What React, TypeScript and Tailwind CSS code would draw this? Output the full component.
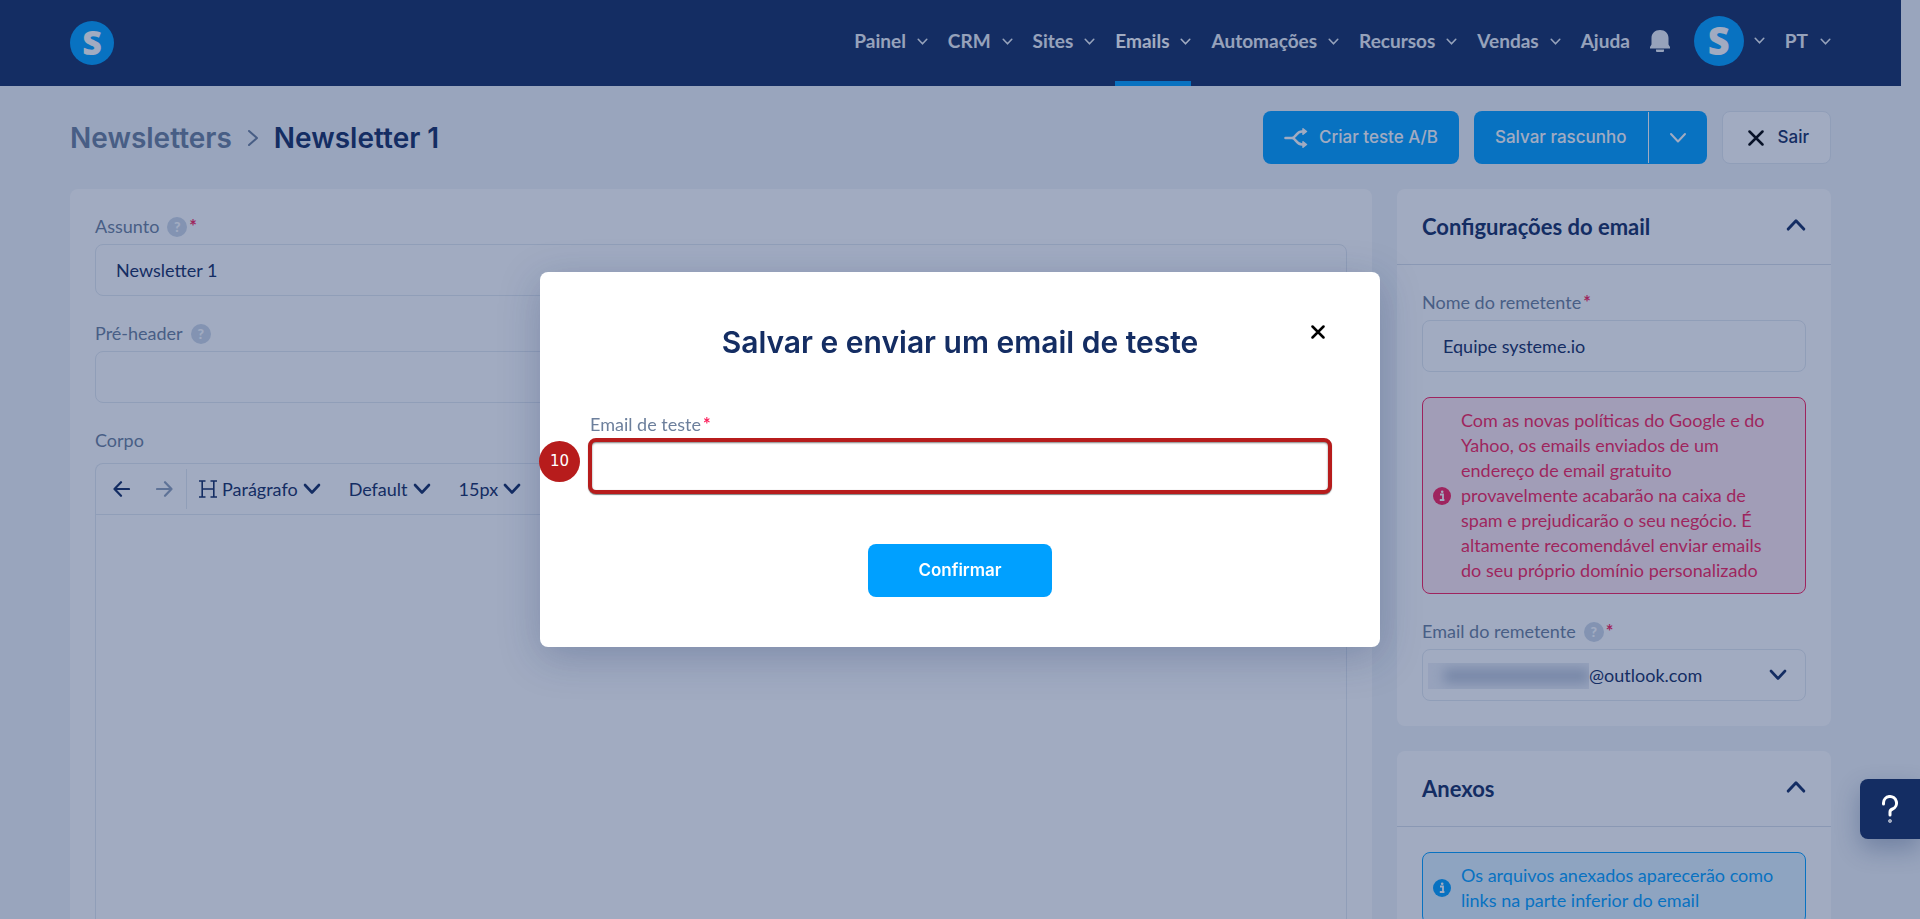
import React from "react";

type ChevronProps = { className: string; width?: number; flip?: boolean };

function Chevron({ className, width = 2.6, flip = false }: ChevronProps) {
  return (
    <svg viewBox="0 0 18 12" className={className} fill="none" stroke="currentColor" strokeWidth={width} strokeLinecap="round" strokeLinejoin="round" aria-hidden="true">
      <path d={flip ? "M2 10 9 2.5 16 10" : "M2 2 9 9.5 16 2"} />
    </svg>
  );
}

function Brand({ className }: { className: string }) {
  return (
    <span className={`flex shrink-0 items-center justify-center rounded-full bg-[#00a0ff] font-['Open_Sans',sans-serif] font-extrabold leading-none text-white ${className}`}>
      S
    </span>
  );
}

const menu = ["Painel", "CRM", "Sites", "Emails", "Automações", "Recursos", "Vendas"];

function Header() {
  return (
    <header className="flex h-[86px] shrink-0 items-center justify-between bg-[#142d63] px-[70px] text-[19px] font-bold text-[#edf1f6]">
      <a href="#inicio" aria-label="Início">
        <Brand className="size-11 pb-0.5 text-[34px]" />
      </a>
      <nav className="flex h-full items-center gap-5">
        {menu.map((item) => (
          <a
            key={item}
            href={`#${item.toLowerCase()}`}
            className={`flex h-full items-center gap-[11px] border-b-[5px] pt-0.5 ${item === "Emails" ? "border-b-[#00a0ff] text-white" : "border-b-transparent"}`}
          >
            {item}
            <Chevron className="w-[11px]" />
          </a>
        ))}
        <a href="#ajuda" className="pb-[3px]">Ajuda</a>
        <button type="button" aria-label="Notificações" className="pb-1">
          <svg viewBox="0 0 20 22" className="w-5" fill="currentColor" aria-hidden="true">
            <path d="M10 0C5 0 1.500 3.500 1.500 8v6.500L0 17v1.500h20V17l-1.500-2.500V8C18.500 3.500 15 0 10 0Z" />
            <path d="M6 19.500h8V21q0 1-1 1H7q-1 0-1-1Z" />
          </svg>
        </button>
        <button type="button" aria-label="Conta" className="ml-1 flex items-center gap-2.5 pb-1">
          <Brand className="size-[50px] pb-0.5 text-[38px]" />
          <Chevron className="w-[11px]" />
        </button>
        <button type="button" className="flex items-center gap-3 pb-[3px]">
          PT
          <Chevron className="w-[11px]" />
        </button>
      </nav>
    </header>
  );
}

function TitleBar() {
  return (
    <div className="flex items-center justify-between font-['Inter',sans-serif]">
      <h1 className="flex items-center gap-4 text-[28px] font-semibold leading-10 text-[#142d63]">
        <a href="#newsletters" className="text-[#6c7f9c]">Newsletters</a>
        <svg viewBox="0 0 10 16" className="w-2.5 text-[#6c7f9c]" fill="none" stroke="currentColor" strokeWidth="2" strokeLinecap="round" strokeLinejoin="round" aria-hidden="true">
          <path d="M1 1 9 8 1 15" />
        </svg>
        Newsletter 1
      </h1>
      <div className="flex h-[53px] gap-[15px] text-[17px] font-medium">
        <button type="button" className="flex items-center gap-[11px] rounded-lg bg-[#00a0ff] px-[21px] text-white">
          <svg viewBox="0 0 24 22" className="w-6" fill="none" stroke="currentColor" strokeWidth="2.600" strokeLinecap="round" strokeLinejoin="round" aria-hidden="true">
            <path d="M1.500 11H8C12 11 12 4.500 18 4.500h1M8 11c4 0 4 6.500 10 6.500h1" />
            <path d="m19 1.800 3.500 2.700L19 7.200ZM19 14.800l3.500 2.700-3.500 2.700Z" fill="currentColor" strokeWidth="1.500" />
          </svg>
          Criar teste A/B
        </button>
        <div className="flex rounded-lg bg-[#00a0ff] py-px text-white">
          <button type="button" className="px-[21px]">Salvar rascunho</button>
          <button type="button" aria-label="Mais opções" className="border-l border-white px-5">
            <Chevron className="w-[18px]" width={2} />
          </button>
        </div>
        <button type="button" className="flex items-center gap-3.5 rounded-lg border border-[#e3e9f0] bg-white pl-[25px] pr-[21px] text-[#142d63]">
          <svg viewBox="0 0 16 16" className="w-4 text-black" fill="none" stroke="currentColor" strokeWidth="2.500" strokeLinecap="round" aria-hidden="true">
            <path d="m1.500 1.500 13 13M14.500 1.500l-13 13" />
          </svg>
          Sair
        </button>
      </div>
    </div>
  );
}

type LabelProps = { htmlFor?: string; text: string; help?: boolean; required?: boolean; tight?: boolean };

function Label({ htmlFor, text, help, required, tight }: LabelProps) {
  return (
    <label htmlFor={htmlFor} className={`flex h-[25px] items-center text-[18px] leading-[25px] text-[#6c7f9c] ${tight ? "mb-[3px]" : "mb-[5px]"}`}>
      {text}
      {help && (
        <span className="ml-2 flex size-5 items-center justify-center rounded-full bg-[#cdd8e7] text-sm font-black leading-none text-white">?</span>
      )}
      {required && <span className="ml-0.5 self-start font-bold leading-6 text-[#fb1e5a]">*</span>}
    </label>
  );
}

const field = "block h-[52px] w-full rounded-lg border border-[#e3e9f0] bg-white px-5 text-[18px] text-[#142d63] outline-none";

function Tool({ children }: { children: React.ReactNode }) {
  return (
    <button type="button" className="flex items-center gap-[5px]">
      {children}
      <Chevron className="w-[18px]" />
    </button>
  );
}

function Editor() {
  return (
    <div className="mt-2.5 flex grow flex-col rounded-t-lg border border-b-0 border-[#e3e9f0] text-[18px] text-[#142d63]">
      <div className="flex h-[51px] items-center border-b border-[#e3e9f0] pl-[17px]">
        <button type="button" aria-label="Desfazer">
          <svg viewBox="0 0 17 16" className="w-[17px]" fill="none" stroke="currentColor" strokeWidth="2.200" strokeLinecap="round" strokeLinejoin="round" aria-hidden="true">
            <path d="M16 8H1.500M8 1.200 1.500 8 8 14.800" />
          </svg>
        </button>
        <button type="button" aria-label="Refazer" className="ml-[26px] text-[#90a1b9]">
          <svg viewBox="0 0 17 16" className="w-[17px]" fill="none" stroke="currentColor" strokeWidth="2.200" strokeLinecap="round" strokeLinejoin="round" aria-hidden="true">
            <path d="M1 8h14.500M9 1.200 15.500 8 9 14.800" />
          </svg>
        </button>
        <span className="ml-[13px] h-10 w-px bg-[#e3e9f0]" />
        <div className="ml-3 flex items-center gap-7">
          <Tool>
            <svg viewBox="0 0 18 18" className="w-[18px]" fill="none" stroke="currentColor" strokeWidth="1.600" aria-hidden="true">
              <path d="M0 1h6.500M11.500 1H18M0 17h6.500M11.500 17H18M3.200 1v16M14.800 1v16M3.200 9h11.600" />
            </svg>
            Parágrafo
          </Tool>
          <Tool>Default</Tool>
          <Tool>15px</Tool>
        </div>
      </div>
    </div>
  );
}

function Panel({ title, children }: { title: string; children: React.ReactNode }) {
  return (
    <section className="shrink-0 rounded-lg bg-white">
      <button type="button" className="flex h-[76px] w-full items-center justify-between border-b border-[#d9e0ea] px-[25px] text-[#142d63]">
        <h2 className="text-[22px] font-bold">{title}</h2>
        <Chevron className="mb-1 w-5" flip />
      </button>
      <div className="flex flex-col gap-[25px] p-[25px]">{children}</div>
    </section>
  );
}

function Notice({ className, children }: { className: string; children: React.ReactNode }) {
  return (
    <div className={`flex items-center gap-2.5 rounded-lg border py-2.5 pl-2.5 pr-6 text-[18px] leading-[25px] ${className}`}>
      <svg viewBox="0 0 18 18" className="w-[18px] shrink-0" aria-hidden="true">
        <circle cx="9" cy="9" r="9" fill="currentColor" />
        <path d="M7 7.500h3v5M6.800 13h4.600" fill="none" stroke="#ffffff" strokeWidth="1.800" />
        <circle cx="9.200" cy="4.700" r="1.300" fill="#ffffff" />
      </svg>
      <p>{children}</p>
    </div>
  );
}

function Sidebar() {
  return (
    <aside className="flex w-[434px] shrink-0 flex-col gap-[25px]">
      <Panel title="Configurações do email">
        <div>
          <Label htmlFor="remetente" text="Nome do remetente" required />
          <input id="remetente" className={field} defaultValue="Equipe systeme.io" />
        </div>
        <Notice className="border-[#fb1e5a] bg-[#ffe8ee] text-[#fb1e5a]">
          Com as novas políticas do Google e do Yahoo, os emails enviados de um endereço de email gratuito provavelmente acabarão na caixa de spam e prejudicarão o seu negócio. É altamente recomendável enviar emails do seu próprio domínio personalizado
        </Notice>
        <div>
          <Label htmlFor="email-remetente" text="Email do remetente" help required />
          <div className="relative">
            <select id="email-remetente" className="block h-[52px] w-full appearance-none rounded-lg border border-[#e3e9f0] bg-white pl-[166px] text-[18px] text-[#142d63]">
              <option>@outlook.com</option>
            </select>
            <span className="absolute left-1.5 top-3.5 h-[26px] w-[161px] overflow-hidden bg-[#eef1f7]">
              <span className="absolute inset-y-1.5 left-4 right-0 bg-[#b7c1d3] blur-[6px]" />
            </span>
            <span className="pointer-events-none absolute inset-y-0 right-[19px] flex items-center text-[#142d63]">
              <Chevron className="w-[18px]" />
            </span>
          </div>
        </div>
      </Panel>
      <Panel title="Anexos">
        <Notice className="border-[#00a0ff] bg-[#e0f3ff] text-[#00a0ff]">
          Os arquivos anexados aparecerão como links na parte inferior do email
        </Notice>
      </Panel>
    </aside>
  );
}

function TestDialog() {
  return (
    <div role="dialog" aria-modal="true" aria-labelledby="titulo-dialogo" className="relative w-[840px] rounded-lg bg-white p-[50px] shadow-[0_10px_40px_rgba(20,45,99,0.25)]">
      <button type="button" aria-label="Fechar" className="absolute right-[55px] top-[53px] text-black">
        <svg viewBox="0 0 14 14" className="w-3.5" fill="none" stroke="currentColor" strokeWidth="2.500" strokeLinecap="round" aria-hidden="true">
          <path d="m1.500 1.500 11 11M12.500 1.500l-11 11" />
        </svg>
      </button>
      <h2 id="titulo-dialogo" className="text-center font-['Inter',sans-serif] text-[30px] font-semibold leading-10 text-[#142d63]">
        Salvar e enviar um email de teste
      </h2>
      <div className="relative mt-[50px]">
        <Label htmlFor="email-teste" text="Email de teste" required tight />
        <input id="email-teste" type="email" className="block h-[52px] w-full rounded-md bg-white px-5 text-[18px] text-[#142d63] shadow-[0_1px_1px_2px_rgba(0,0,0,0.5),inset_0_1px_2px_2px_rgba(0,0,0,0.5)] outline-4 outline-offset-[-2px] outline-[#b71c1c]" />
        <span className="absolute -left-[51px] bottom-2.5 flex size-[41px] items-center justify-center rounded-full bg-[#b71c1c] font-['DejaVu_Sans',sans-serif] text-[15px] text-white">10</span>
      </div>
      <button type="button" className="mx-auto mt-[52px] block h-[53px] w-[184px] rounded-lg bg-[#00a0ff] font-['Inter',sans-serif] text-[17px] font-semibold text-white">
        Confirmar
      </button>
    </div>
  );
}

export default function App() {
  return (
    <div className="h-screen overflow-hidden bg-[#f2f5f8] pr-[19px] font-['Lato',sans-serif]">
      <div className="flex h-full flex-col">
        <Header />
        <main className="flex min-h-0 grow flex-col px-[70px] pt-[25px]">
          <TitleBar />
          <div className="mt-[25px] flex min-h-0 grow gap-[25px]">
            <section className="flex grow flex-col rounded-t-lg bg-white px-[25px] pt-[25px]">
              <Label htmlFor="assunto" text="Assunto" help required />
              <input id="assunto" className={field} defaultValue="Newsletter 1" />
              <div className="mt-[25px]">
                <Label htmlFor="preheader" text="Pré-header" help />
                <input id="preheader" className={field} />
              </div>
              <div className="mt-[25px] flex grow flex-col">
                <span className="text-[18px] leading-[25px] text-[#6c7f9c]">Corpo</span>
                <Editor />
              </div>
            </section>
            <Sidebar />
          </div>
        </main>
      </div>
      <div className="fixed inset-0 flex items-center justify-center bg-[#142d63]/40">
        <TestDialog />
      </div>
      <button type="button" aria-label="Suporte" className="fixed bottom-20 right-0 flex size-[60px] items-center justify-center rounded-l-lg bg-[#142d63] text-white shadow-[0_10px_25px_rgba(20,45,99,0.3)]">
        <svg viewBox="0 0 16 28" className="w-4" fill="none" stroke="currentColor" strokeWidth="3" strokeLinecap="round" aria-hidden="true">
          <path d="M1.500 9V8a6.500 6.500 0 1 1 9 6Q8 15 8 17v3" />
          <circle cx="8" cy="26" r="0.500" strokeWidth="2.500" />
        </svg>
      </button>
    </div>
  );
}
